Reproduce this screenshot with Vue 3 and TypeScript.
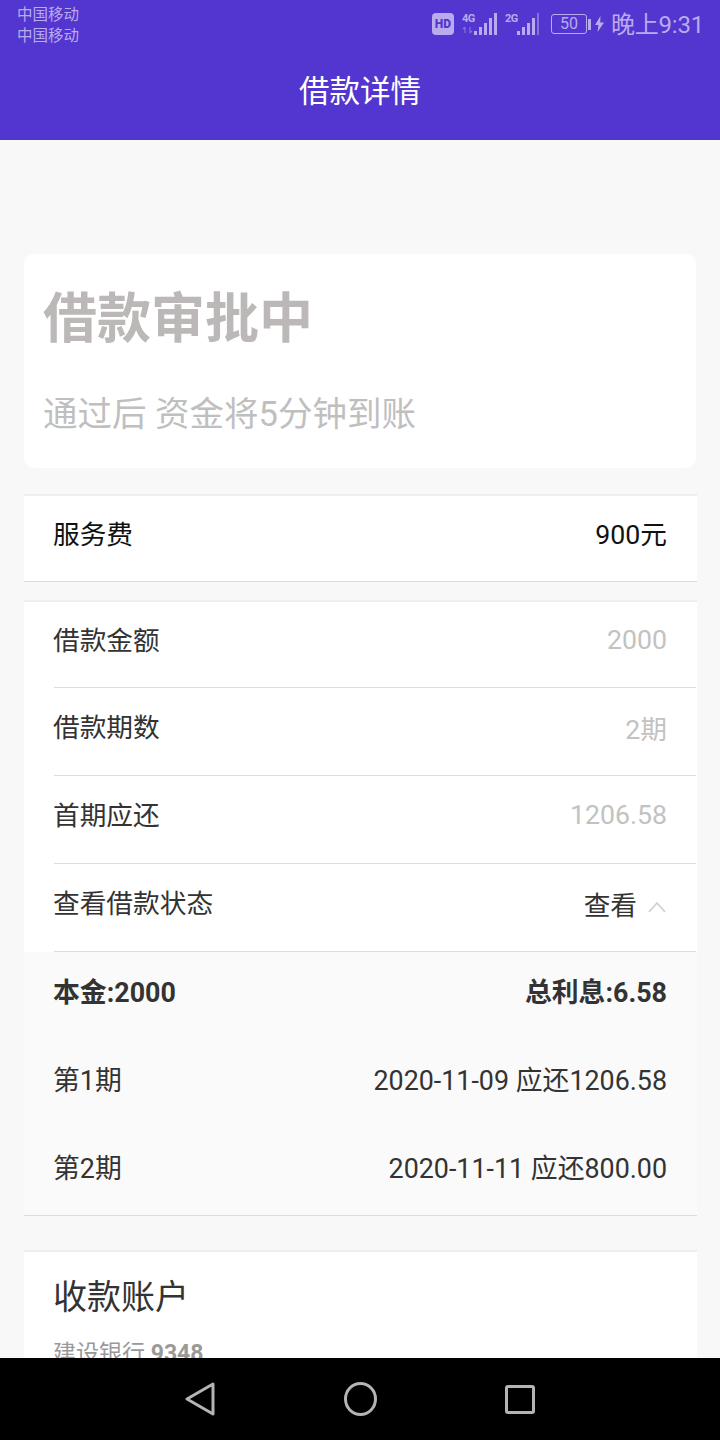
<script setup lang="ts">
interface Row {
  label: string
  value: string
}

const loanRows: Row[] = [
  { label: '借款金额', value: '2000' },
  { label: '借款期数', value: '2期' },
  { label: '首期应还', value: '1206.58' },
]

const terms: Row[] = [
  { label: '第1期', value: '2020-11-09 应还1206.58' },
  { label: '第2期', value: '2020-11-11 应还800.00' },
]
</script>

<template>
  <div class="page">
    <!-- Header -->
    <header class="header">
      <div class="status">
        <div class="carriers">
          <span>中国移动</span>
          <span>中国移动</span>
        </div>
        <div class="status-right">
          <span class="hd">HD</span>
          <span class="net">
            <span class="net-label">4G</span>
            <svg class="arrows" width="12" height="6" viewBox="0 0 12 6">
              <path d="M3 0v6M1 2l2-2M8 0v6M8 6l2-2" fill="none" stroke="currentColor" stroke-width="1.2" opacity=".5" />
            </svg>
          </span>
          <svg class="signal" width="23" height="22" viewBox="0 0 23 22">
            <rect x="0" y="18" width="3" height="4" />
            <rect x="5" y="14" width="3" height="8" />
            <rect x="10" y="10" width="3" height="12" />
            <rect x="15" y="5" width="3" height="17" />
            <rect x="20" y="0" width="3" height="22" />
          </svg>
          <span class="net">
            <span class="net-label">2G</span>
          </span>
          <svg class="signal" width="22" height="22" viewBox="0 0 22 22">
            <rect x="0" y="18" width="3" height="4" />
            <rect x="5" y="14" width="3" height="8" />
            <rect x="10" y="10" width="3" height="12" />
            <rect x="15" y="5" width="3" height="17" />
            <rect x="20" y="0" width="2" height="22" opacity=".5" />
          </svg>
          <span class="battery">50</span>
          <span class="battery-cap"></span>
          <svg class="bolt" width="9" height="16" viewBox="0 0 9 16">
            <path d="M5.5 0 0 9h3.4L2.6 16 9 6.4H5.2z" />
          </svg>
          <span class="clock">晚上9:31</span>
        </div>
      </div>
      <h1 class="title">借款详情</h1>
    </header>

    <!-- Content -->
    <main class="content">
      <section class="state-card">
        <h2 class="state-title">借款审批中</h2>
        <p class="state-sub">通过后 资金将5分钟到账</p>
      </section>

      <section class="block fee">
        <span class="row-label">服务费</span>
        <span>900元</span>
      </section>

      <section class="block loan">
        <div v-for="row in loanRows" :key="row.label" class="row">
          <span class="row-label">{{ row.label }}</span>
          <span class="row-value">{{ row.value }}</span>
        </div>
        <div class="row">
          <span class="row-label">查看借款状态</span>
          <span class="row-toggle">
            查看
            <svg width="18" height="12" viewBox="0 0 18 12">
              <path d="M1 11 9 2l8 9" fill="none" stroke="#cfcfcf" stroke-width="1.6" />
            </svg>
          </span>
        </div>
        <div class="plan">
          <div class="plan-row plan-total">
            <span class="row-label">本金:2000</span>
            <span>总利息:6.58</span>
          </div>
          <div v-for="term in terms" :key="term.label" class="plan-row">
            <span class="row-label">{{ term.label }}</span>
            <span>{{ term.value }}</span>
          </div>
        </div>
      </section>

      <section class="block account">
        <h3 class="account-title">收款账户</h3>
        <p class="account-bank">建设银行 <b>9348</b></p>
      </section>
    </main>

    <!-- Navigation bar -->
    <nav class="nav">
      <svg width="30" height="34" viewBox="0 0 30 34">
        <path d="M28 2 2 17l26 15z" fill="none" stroke="#b4b4b4" stroke-width="3" stroke-linejoin="round" />
      </svg>
      <svg width="33" height="34" viewBox="0 0 33 34">
        <ellipse cx="16.5" cy="17" rx="15" ry="15.5" fill="none" stroke="#b4b4b4" stroke-width="3" />
      </svg>
      <svg class="nav-square" width="30" height="29" viewBox="0 0 30 29">
        <rect x="1.5" y="1.5" width="27" height="26" rx="1.5" fill="none" stroke="#b4b4b4" stroke-width="3" />
      </svg>
    </nav>
  </div>
</template>

<style>
html,
body {
  margin: 0;
  background: #f8f8f8;
}
</style>

<style scoped>
.page {
  display: flex;
  flex-direction: column;
  width: 720px;
  height: 1440px;
  overflow: hidden;
  background: #f8f8f8;
  font-family: Roboto, "Noto Sans CJK SC", sans-serif;
}

.header {
  flex-shrink: 0;
  height: 140px;
  box-sizing: border-box;
  background: #5335cf;
}

.status {
  display: flex;
  justify-content: space-between;
  height: 48px;
  padding: 0 16px 0 17px;
  color: #b9abee;
}

.carriers {
  display: flex;
  flex-direction: column;
  padding-top: 5px;
  font-size: 15.5px;
  line-height: 21px;
}

.status-right {
  display: flex;
  align-items: center;
  height: 48px;
  fill: #b9abee;
}

.hd {
  display: block;
  width: 22px;
  height: 22px;
  border-radius: 4px;
  background: #b9abee;
  color: #5335cf;
  font-size: 12px;
  font-weight: 900;
  line-height: 22px;
  text-align: center;
}

.net {
  display: flex;
  flex-direction: column;
  width: 12px;
  height: 24px;
  margin-left: 8px;
}

.net-label {
  font-size: 11px;
  font-weight: 700;
  line-height: 14px;
  letter-spacing: -0.5px;
}

.arrows {
  display: block;
  margin-top: 1px;
}

.battery {
  box-sizing: border-box;
  width: 36px;
  height: 20px;
  margin-left: 12px;
  border: 1px solid #b9abee;
  border-radius: 3px;
  font-size: 16px;
  line-height: 18px;
  text-align: center;
}

.battery-cap {
  width: 3px;
  height: 11px;
  margin-left: 1px;
  background: #b9abee;
}

.bolt {
  margin-left: 4px;
}

.clock {
  margin-top: 2px;
  margin-left: 7px;
  font-size: 24px;
  line-height: 44px;
  letter-spacing: -0.2px;
}

.title {
  margin: 0;
  color: #fff;
  font-size: 30.5px;
  font-weight: 400;
  line-height: 88px;
  text-align: center;
}

.content {
  flex: 1;
  min-height: 0;
  overflow: hidden;
  padding: 114px 23px 0 24px;
}

.state-card {
  box-sizing: border-box;
  width: 672px;
  height: 214px;
  padding: 30px 19px 0;
  border-radius: 10px;
  background: #fff;
}

.state-title {
  margin: 0;
  color: #bdb8b8;
  font-size: 54px;
  font-weight: 700;
  line-height: 72px;
}

.state-sub {
  margin: 35px 0 0;
  color: #bfbfbf;
  font-size: 34.5px;
  line-height: 46px;
}

.block {
  background: #fff;
  border-top: 2px solid #eeeeee;
}

.fee {
  display: flex;
  justify-content: space-between;
  box-sizing: border-box;
  height: 88px;
  margin-top: 26px;
  padding: 18px 30px 0;
  border-bottom: 1px solid #dddddd;
  color: #111;
  font-size: 26.7px;
  line-height: 42px;
}

.loan {
  margin-top: 18px;
  padding-left: 30px;
}

.row {
  display: flex;
  justify-content: space-between;
  align-items: center;
  box-sizing: border-box;
  height: 88px;
  margin-right: 1px;
  padding: 0 29px 9px 0;
  border-bottom: 1px solid #dddddd;
  font-size: 26.7px;
}

.row:first-child {
  height: 86px;
}

.row-label {
  margin-left: -1px;
  color: #333;
}

.row .row-label {
  margin-bottom: 3px;
}

.fee .row-label {
  color: #111;
}

.row-value {
  color: #c2c2c2;
}

.row-toggle {
  display: flex;
  align-items: center;
  gap: 11px;
  margin-right: 1px;
  color: #333;
}

.row-toggle svg {
  margin-top: 8px;
}

.plan {
  box-sizing: border-box;
  height: 264px;
  margin-left: -30px;
  padding: 0 30px;
  background: #fafafa;
  border-bottom: 1px solid #dddddd;
}

.plan-row {
  display: flex;
  justify-content: space-between;
  align-items: center;
  box-sizing: border-box;
  height: 88px;
  padding-bottom: 12px;
  color: #333;
  font-size: 26.85px;
}

.plan-total {
  font-weight: 700;
}

.account {
  margin-top: 34px;
  padding: 20px 30px 0;
  height: 200px;
}

.account-title {
  margin: 0 0 0 -1px;
  color: #333;
  font-size: 34px;
  font-weight: 400;
  line-height: 50px;
}

.account-bank {
  margin: 16px 0 0 -1px;
  color: #999;
  font-size: 23px;
  line-height: 32px;
}

.nav {
  display: flex;
  flex-shrink: 0;
  justify-content: center;
  align-items: center;
  gap: 129px;
  height: 82px;
  background: #000;
}

.nav-square {
  margin-left: -1px;
}
</style>
